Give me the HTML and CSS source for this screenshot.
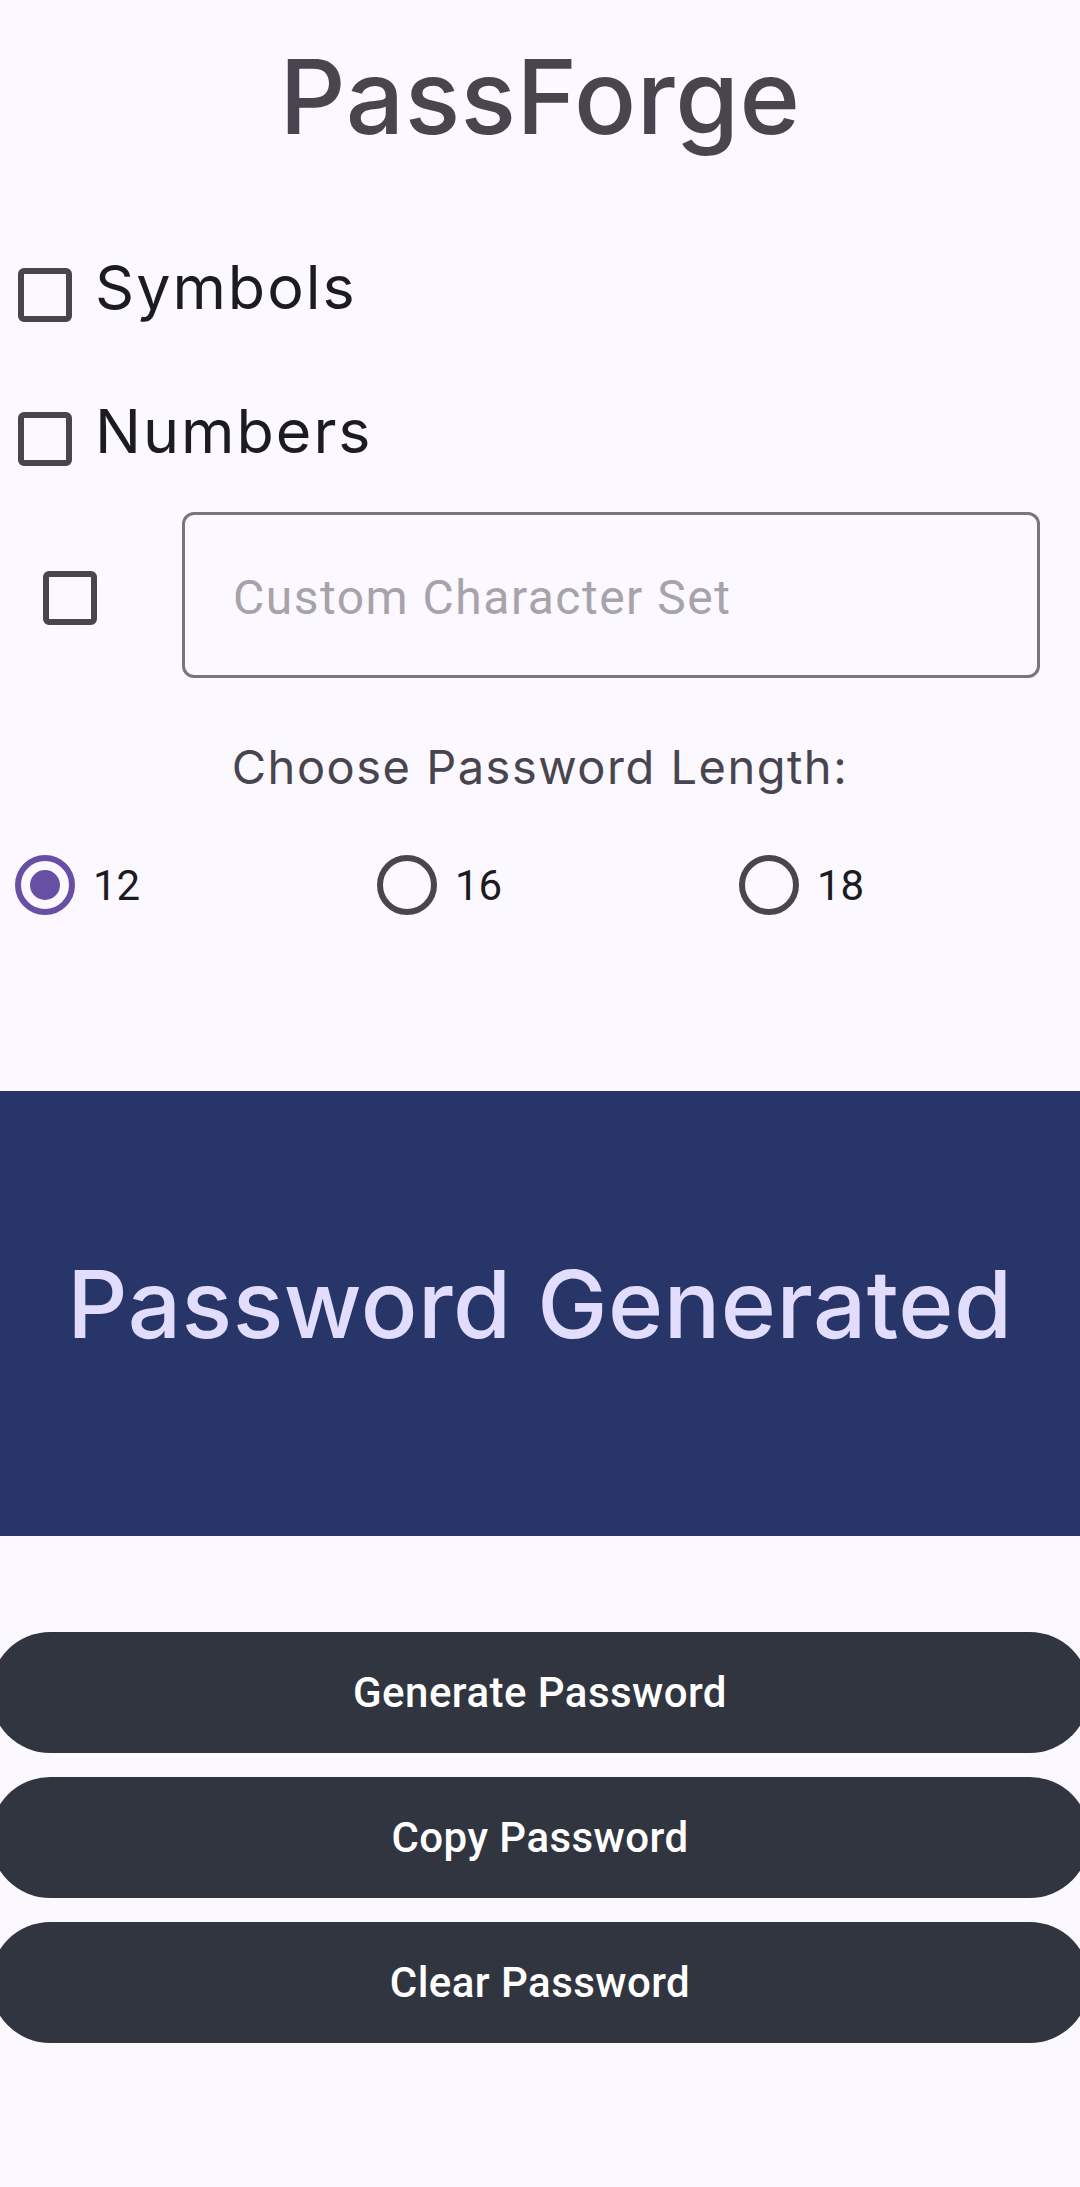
FILE: index.html
```html
<!DOCTYPE html>
<html lang="en">
<head>
<meta charset="utf-8">
<title>PassForge</title>
<link rel="stylesheet" href="styles.css">
</head>
<body>
<main class="app">
  <h1 class="title">PassForge</h1>

  <div class="opt opt-first">
    <span class="cb"></span>
    <span class="opt-label">Symbols</span>
  </div>
  <div class="opt">
    <span class="cb"></span>
    <span class="opt-label">Numbers</span>
  </div>

  <div class="custom">
    <span class="cb"></span>
    <div class="field"><span class="placeholder">Custom Character Set</span></div>
  </div>

  <p class="len-label">Choose Password Length:</p>

  <div class="radios">
    <div class="radio-item"><span class="radio on"></span><span class="radio-text">12</span></div>
    <div class="radio-item"><span class="radio"></span><span class="radio-text">16</span></div>
    <div class="radio-item"><span class="radio"></span><span class="radio-text">18</span></div>
  </div>

  <section class="result"><p class="result-text">Password Generated</p></section>

  <div class="actions">
    <button class="btn">Generate Password</button>
    <button class="btn">Copy Password</button>
    <button class="btn">Clear Password</button>
  </div>
</main>
</body>
</html>
```
FILE: styles.css
```css
* { box-sizing: border-box; }
html, body { margin: 0; padding: 0; }
body {
  background: #fbf8ff;
  width: 1080px;
  min-height: 2187px;
  overflow: hidden;
  font-family: Inter, "Noto Sans", sans-serif;
}
.app { display: flex; flex-direction: column; }

.title {
  margin: 37px 0 0;
  height: 120px;
  line-height: 120px;
  font-size: 103px;
  font-weight: 500;
  letter-spacing: 0.5px;
  color: #48454e;
  text-align: center;
}

.opt {
  display: flex;
  align-items: flex-start;
  height: 70px;
  padding-left: 18px;
  margin-top: 74px;
}
.opt-first { margin-top: 96px; }
.cb {
  flex: none;
  width: 54px;
  height: 54px;
  border: 6px solid #49454f;
  border-radius: 6px;
  margin-top: 15px;
}
.opt-label {
  margin-left: 23px;
  margin-top: -1px;
  font-size: 61px;
  line-height: 70px;
  letter-spacing: 2px;
  color: #1c1b1f;
}

.custom {
  display: flex;
  align-items: flex-start;
  margin-top: 45px;
  padding-left: 43px;
}
.custom .cb { margin-top: 59px; }
.field {
  margin-left: 85px;
  width: 858px;
  height: 166px;
  border: 3px solid #79747e;
  border-radius: 12px;
  padding: 5px 0 0 48px;
  display: flex;
  align-items: center;
}
.placeholder {
  font-family: Roboto, sans-serif;
  font-size: 48px;
  line-height: 56px;
  letter-spacing: 1.5px;
  color: #a6a3ab;
}

.len-label {
  margin: 59px 0 0;
  text-align: center;
  font-size: 47px;
  line-height: 60px;
  letter-spacing: 1.5px;
  color: #49454f;
}

.radios {
  display: grid;
  grid-template-columns: repeat(3, 362px);
  margin-top: 51px;
  padding-left: 15px;
  height: 70px;
}
.radio-item { display: flex; align-items: center; }
.radio {
  flex: none;
  width: 60px;
  height: 60px;
  border: 6px solid #49454f;
  border-radius: 50%;
  display: flex;
  align-items: center;
  justify-content: center;
}
.radio.on { border-color: #6750a4; }
.radio.on::after {
  content: "";
  width: 30px;
  height: 30px;
  border-radius: 50%;
  background: #6750a4;
}
.radio-text {
  margin-left: 18px;
  margin-top: 3px;
  font-family: Roboto, sans-serif;
  font-size: 42px;
  line-height: 70px;
  color: #1c1b1f;
}

.result {
  margin-top: 173px;
  height: 445px;
  background: #283568;
  display: flex;
  align-items: center;
  justify-content: center;
  padding-bottom: 19px;
}
.result-text {
  margin: 0;
  font-size: 94px;
  font-weight: 500;
  line-height: 110px;
  letter-spacing: 0.5px;
  color: #e2ddfd;
}

.actions {
  display: flex;
  flex-direction: column;
  gap: 24px;
  margin: 96px -10px 0;
}
.btn {
  height: 121px;
  border: 0;
  border-radius: 61px;
  background: #313540;
  color: #ffffff;
  font-family: Roboto, sans-serif;
  font-size: 42px;
  font-weight: 500;
  letter-spacing: 0.45px;
  padding: 0;
}
```
